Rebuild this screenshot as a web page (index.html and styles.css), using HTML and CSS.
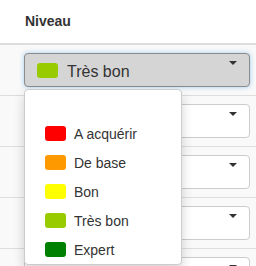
FILE: index.html
```html
<!DOCTYPE html>
<html lang="fr">
<head>
    <meta charset="UTF-8">
    <title>Niveau</title>
    <link rel="stylesheet" href="styles.css">
</head>
<body>
<table class="grid">
    <thead>
    <tr>
        <th>Niveau</th>
    </tr>
    </thead>
    <tbody>
    <tr>
        <td>
            <div class="picker">
                <div class="select open">
                    <span class="swatch tres-bon"></span>
                    <span class="label">Très bon</span>
                    <span class="caret"></span>
                </div>
                <ul class="menu">
                    <li class="empty"></li>
                    <li><span class="swatch a-acquerir"></span>A acquérir</li>
                    <li><span class="swatch de-base"></span>De base</li>
                    <li><span class="swatch bon"></span>Bon</li>
                    <li><span class="swatch tres-bon"></span>Très bon</li>
                    <li><span class="swatch expert"></span>Expert</li>
                </ul>
            </div>
        </td>
    </tr>
    <tr>
        <td><div class="select"><span class="caret"></span></div></td>
    </tr>
    <tr>
        <td><div class="select"><span class="caret"></span></div></td>
    </tr>
    <tr>
        <td><div class="select"><span class="caret"></span></div></td>
    </tr>
    <tr>
        <td><div class="select"><span class="caret"></span></div></td>
    </tr>
    </tbody>
</table>
</body>
</html>
```

FILE: styles.css
```css
body {
    margin: 0;
    font-family: "Liberation Sans", Arial, sans-serif;
    color: #333;
    background-color: #fff;
    overflow: hidden;
}

.grid {
    width: 100%;
    border-collapse: collapse;
}

th {
    height: 41px;
    padding: 0 6px 2px 25px;
    text-align: left;
    font-size: 14px;
    font-weight: bold;
    vertical-align: middle;
    border-bottom: 2px solid #ddd;
}

td {
    padding: 8px 6px 8px 24px;
    background-color: #f9f9f9;
    border-bottom: 1px solid #ddd;
}

.picker {
    position: relative;
}

.select {
    position: relative;
    display: flex;
    align-items: center;
    height: 34px;
    box-sizing: border-box;
    padding: 0 12px;
    border: 1px solid #ccc;
    border-radius: 4px;
    background-color: #fff;
    font-size: 16px;
}

.select.open {
    background-color: #d5d5d5;
    border-color: #8c8c8c;
    box-shadow: 0 0 5px rgba(102, 175, 233, 0.6);
}

.select .label {
    margin-left: 9px;
    padding-top: 3px;
}

.caret {
    position: absolute;
    right: 12px;
    top: 7px;
    border-top: 4px solid #333;
    border-left: 4px solid transparent;
    border-right: 4px solid transparent;
}

.swatch {
    display: inline-block;
    width: 21px;
    height: 15px;
    border-radius: 3px;
    flex-shrink: 0;
}

.a-acquerir { background-color: #ff0000; }
.de-base { background-color: #ff9900; }
.bon { background-color: #ffff00; }
.tres-bon { background-color: #99cc00; }
.expert { background-color: #008000; }

.menu {
    position: absolute;
    top: 36px;
    left: 0;
    width: 158px;
    box-sizing: border-box;
    margin: 0;
    padding: 0;
    list-style: none;
    background-color: #fff;
    border: 1px solid #ccc;
    border-radius: 4px;
    box-shadow: 0 6px 12px rgba(0, 0, 0, 0.175);
    z-index: 10;
}

.menu li {
    display: flex;
    align-items: center;
    height: 29px;
    padding-left: 20px;
    font-size: 14px;
}

.menu li .swatch {
    margin-right: 8px;
}
```
